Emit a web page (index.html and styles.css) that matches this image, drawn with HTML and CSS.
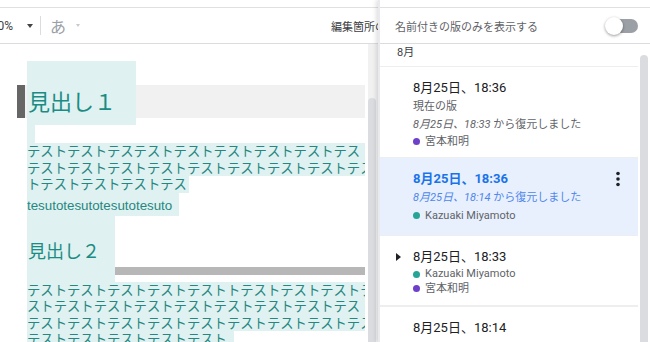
FILE: index.html
```html
<!DOCTYPE html>
<html lang="ja">
<head>
    <meta charset="UTF-8">
    <title>版の履歴</title>
    <link rel="stylesheet" href="styles.css">
</head>
<body>
<div class="app">
    <div class="editor">
        <div class="topline"></div>
        <div class="toolbar">
            <span class="zoom">100%</span>
            <span class="caret-down"></span>
            <span class="tb-sep"></span>
            <span class="ime">あ</span>
            <span class="caret-down light"></span>
            <span class="tb-label">編集箇所の表示</span>
        </div>
        <div class="doc-wrap">
            <div class="doc">
                <div class="h1-row">
                    <span class="marker"></span>
                    <div class="hl h1">見出し１</div>
                </div>
                <div class="gap-row"><span class="hl gap-bit"></span></div>
                <div class="para">
                    <div class="ln hl">テストテストテステストテストテストテストテストテス</div>
                    <div class="ln hl">テストテストテストテストテストテストテストテストテスト</div>
                    <div class="ln hl fit">トテストテストテストテス</div>
                    <div class="ln hl fit latin">tesutotesutotesutotesuto</div>
                </div>
                <div class="h2-row">
                    <div class="hl h2">見出し２</div>
                    <span class="rule"></span>
                </div>
                <div class="para">
                    <div class="ln hl">テストテストテストテストテストトテストテストテストテスト</div>
                    <div class="ln hl">ストテストテストテストテストテストテストテストテス</div>
                    <div class="ln hl">テストテストテストテストテストテストテストテストテスト</div>
                    <div class="ln hl fit last">テストテストテストテストテスト</div>
                </div>
            </div>
            <div class="vscroll"><div class="track"><div class="thumb"></div></div></div>
        </div>
    </div>

    <aside class="panel">
        <div class="topline"></div>
        <div class="panel-head">
            <span class="panel-title">名前付きの版のみを表示する</span>
            <span class="toggle"><span class="knob"></span></span>
        </div>
        <div class="panel-body">
            <div class="list">
                <div class="month">8月</div>

                <div class="item item-current">
                    <div class="item-main">
                        <div class="item-title">8月25日、18:36</div>
                        <div class="item-line">現在の版</div>
                        <div class="item-line"><i>8月25日、18:33</i> から復元しました</div>
                        <div class="item-line"><span class="dot purple"></span>宮本和明</div>
                    </div>
                </div>

                <div class="item item-selected">
                    <div class="item-main">
                        <div class="item-title">8月25日、18:36</div>
                        <div class="item-line"><i>8月25日、18:14</i> から復元しました</div>
                        <div class="item-line author"><span class="dot teal"></span>Kazuaki Miyamoto</div>
                    </div>
                    <div class="item-more">
                        <svg width="4" height="20" viewBox="0 0 4 20">
                            <circle cx="2" cy="4.5" r="1.8" fill="#202124"/>
                            <circle cx="2" cy="10" r="1.8" fill="#202124"/>
                            <circle cx="2" cy="15.5" r="1.8" fill="#202124"/>
                        </svg>
                    </div>
                </div>

                <div class="item item-group">
                    <div class="item-lead"><span class="caret-right"></span></div>
                    <div class="item-main">
                        <div class="item-title">8月25日、18:33</div>
                        <div class="item-line tight"><span class="dot teal"></span>Kazuaki Miyamoto</div>
                        <div class="item-line tight"><span class="dot purple"></span>宮本和明</div>
                    </div>
                </div>

                <div class="item item-next">
                    <div class="item-main">
                        <div class="item-title">8月25日、18:14</div>
                    </div>
                </div>
            </div>
            <div class="pscroll"><div class="thumb"></div></div>
        </div>
    </aside>
</div>
</body>
</html>
```

FILE: styles.css
```css
/* Base */
body {
    margin: 0;
    width: 650px;
    height: 342px;
    overflow: hidden;
    background: #fff;
    font-family: Roboto, "Noto Sans CJK JP", sans-serif;
}

.app {
    display: flex;
    height: 342px;
}

.topline {
    height: 7px;
    border-bottom: 1px solid #e0e0e0;
    flex-shrink: 0;
}

/* Editor side */
.editor {
    width: 378px;
    flex-shrink: 0;
    display: flex;
    flex-direction: column;
    overflow: hidden;
}

.toolbar {
    height: 35px;
    border-bottom: 1px solid #dadce0;
    display: flex;
    align-items: center;
    flex-shrink: 0;
    font-size: 12px;
    color: #3c4043;
    white-space: nowrap;
}

.zoom {
    margin-left: -16px;
}

.caret-down {
    width: 0;
    height: 0;
    border-left: 3.5px solid transparent;
    border-right: 3.5px solid transparent;
    border-top: 4px solid #444;
    margin-left: 14px;
}

.caret-down.light {
    border-left-width: 2.5px;
    border-right-width: 2.5px;
    border-top: 3px solid #c8cacc;
    margin-left: 10px;
}

.tb-sep {
    width: 1px;
    height: 19px;
    background: #dadce0;
    margin-left: 7px;
}

.ime {
    font-family: "Noto Sans CJK JP", sans-serif;
    font-size: 16px;
    color: #9aa0a6;
    margin-left: 9px;
}

.tb-label {
    margin-left: auto;
    margin-right: -30px;
    font-size: 11px;
    color: #3c4043;
}

/* Document */
.doc-wrap {
    flex: 1;
    display: flex;
    min-height: 0;
}

.doc {
    width: 365px;
    flex-shrink: 0;
    overflow: hidden;
    box-sizing: border-box;
    padding: 17px 0 0 27px;
    font-family: "Noto Sans CJK JP", sans-serif;
    color: #268781;
}

.hl {
    background: #dff1f0;
}

.h1-row {
    display: flex;
    height: 64px;
    margin-left: -10px;
    background: linear-gradient(#f1f1f1, #f1f1f1) no-repeat 0 24px / 100% 33px;
}

.marker {
    width: 8px;
    height: 33px;
    margin-top: 24px;
    background: #666;
}

.h1 {
    width: 109px;
    margin-left: 2px;
    box-sizing: border-box;
    padding: 22px 0 0 1px;
    font-size: 22px;
    line-height: 34px;
    color: #1a8c84;
}

.gap-row {
    height: 18px;
}

.gap-bit {
    display: block;
    width: 8px;
    height: 18px;
}

.ln {
    height: 16.5px;
    font-size: 13.33px;
    line-height: 16.5px;
    white-space: nowrap;
}

.ln.fit {
    width: fit-content;
    padding-right: 2px;
}

.ln.latin {
    height: 23px;
    box-sizing: border-box;
    padding: 3px 7px 0 0;
    line-height: 20px;
    font-family: "Liberation Sans", Arial, sans-serif;
}

.ln.last {
    padding-right: 7px;
}

.h2-row {
    display: flex;
    height: 66px;
}

.h2 {
    width: 88px;
    box-sizing: border-box;
    padding: 19.5px 0 0 1px;
    font-size: 18px;
    line-height: 30px;
    color: #1a8c84;
}

.rule {
    flex: 1;
    height: 8px;
    margin-top: 51px;
    background: #b7b7b7;
}

.vscroll {
    width: 13px;
    padding-left: 3px;
    box-sizing: border-box;
}

.vscroll .track {
    height: 100%;
    box-sizing: border-box;
    padding-top: 54px;
    background: #f1f1f1;
}

.vscroll .thumb {
    width: 8px;
    height: 100%;
    background: #dadce0;
    border-radius: 4px 4px 0 0;
}

/* Version history panel */
.panel {
    width: 272px;
    flex-shrink: 0;
    display: flex;
    flex-direction: column;
    border-left: 2px solid #e8eaed;
    box-sizing: border-box;
    box-shadow: -2px 0 4px rgba(0, 0, 0, 0.12);
    background: #fff;
    z-index: 1;
}

.panel-head {
    height: 35px;
    border-bottom: 1px solid #dadce0;
    display: flex;
    align-items: center;
    justify-content: space-between;
    padding: 0 12px 0 15px;
    flex-shrink: 0;
}

.panel-title {
    font-size: 11px;
    color: #5f6368;
}

.toggle {
    position: relative;
    width: 31px;
    height: 14px;
    border-radius: 7px;
    background: #9aa0a6;
}

.knob {
    position: absolute;
    left: -2px;
    top: -2px;
    width: 18px;
    height: 18px;
    border-radius: 50%;
    background: #fff;
    box-shadow: 0 1px 3px rgba(0, 0, 0, 0.4);
}

.panel-body {
    flex: 1;
    display: flex;
    min-height: 0;
}

.list {
    flex: 1;
    overflow: hidden;
}

.month {
    height: 22px;
    box-sizing: border-box;
    padding: 1px 0 0 17px;
    font-size: 11px;
    line-height: 15px;
    color: #3c4043;
}

.item {
    display: grid;
    grid-template-columns: 33px 1fr 40px;
    padding: 11px 0 8px;
    border-top: 1px solid #eceeef;
    background: #fff;
}

.item-current {
    padding-bottom: 6.5px;
}

.item-selected {
    padding-bottom: 11px;
    background: #e8f0fe;
}

.item-group {
    padding-bottom: 9px;
}

.item-next {
    border-top-width: 2px;
}

.item-lead {
    grid-column: 1;
    padding-left: 16px;
}

.item-main {
    grid-column: 2;
}

.item-more {
    grid-column: 3;
    display: flex;
    justify-content: center;
}

.caret-right {
    display: block;
    width: 0;
    height: 0;
    margin-top: 6px;
    border-top: 4px solid transparent;
    border-bottom: 4px solid transparent;
    border-left: 5px solid #202124;
}

.item-title {
    font-size: 13px;
    line-height: 20px;
    color: #202124;
}

.item-line {
    display: flex;
    align-items: center;
    font-size: 11px;
    line-height: 17.5px;
    color: #5f6368;
    white-space: pre;
}

.item-line.tight {
    line-height: 14.5px;
}

.item-selected .item-title {
    font-weight: bold;
    color: #1a73e8;
}

.item-selected .item-line {
    color: #4f86ec;
}

.item-selected .item-line.author {
    color: #5f6368;
}

.dot {
    width: 7px;
    height: 7px;
    border-radius: 50%;
    margin: 0 5px 0 0;
}

.dot.purple {
    background: #6e3fc9;
}

.dot.teal {
    background: #26a596;
}

.pscroll {
    width: 12px;
    padding: 11px 2px 0 2px;
    box-sizing: border-box;
}

.pscroll .thumb {
    width: 8px;
    height: 100%;
    background: #dadce0;
    border-radius: 4px 4px 0 0;
}
```
